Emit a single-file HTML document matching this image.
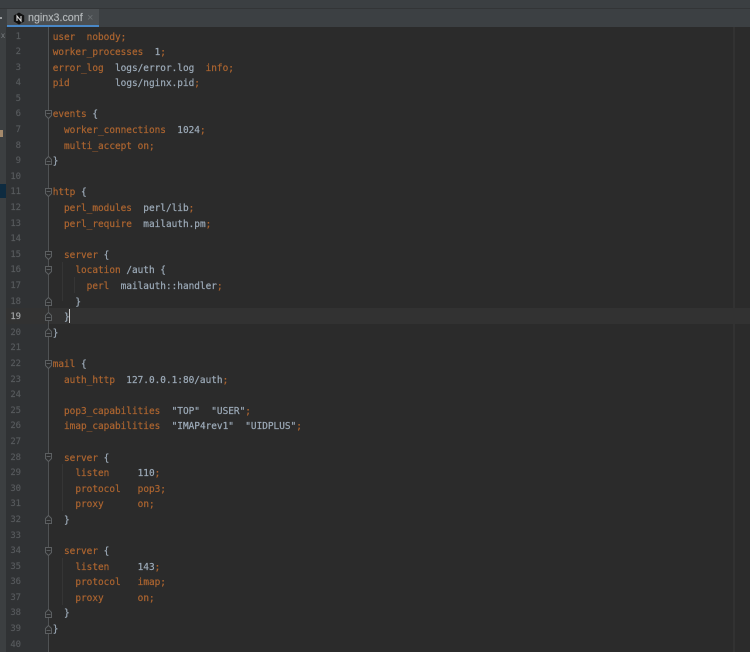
<!DOCTYPE html>
<html>
<head>
<meta charset="utf-8">
<style>
html,body{margin:0;padding:0;background:#2b2b2b;}
#root{position:relative;width:750px;height:652px;overflow:hidden;background:#2b2b2b;font-family:"DejaVu Sans Mono","Liberation Mono",monospace;}
.abs{position:absolute;}
#code{position:absolute;left:52.7px;top:29.5px;font-size:9.42px;line-height:15.6px;white-space:pre;color:#9dabb9;filter:blur(0.25px);-webkit-text-stroke:0.2px;}
#code b{font-weight:normal;color:#ad6530;}
#nums{position:absolute;left:2px;width:19px;top:29.5px;font-size:8.9px;line-height:15.6px;text-align:right;color:#585b5e;filter:blur(0.25px);-webkit-text-stroke:0.15px;}
</style>
</head>
<body>
<div id="root">
  <!-- top bars -->
  <div class="abs" style="left:0;top:0;width:750px;height:8px;background:#3b3f42;"></div>
  <div class="abs" style="left:0;top:8px;width:750px;height:1px;background:#333537;"></div>
  <div class="abs" style="left:0;top:9px;width:750px;height:18px;background:#3c4043;"></div>
  <div class="abs" style="left:7px;top:9px;width:92px;height:16px;background:#4b4f52;"></div>
  <div class="abs" style="left:7px;top:25px;width:92px;height:2px;background:#4a88c7;"></div>
  <div class="abs" style="left:0;top:17px;width:2px;height:2px;background:#9a9d9f;"></div>
  <svg class="abs" style="left:13px;top:12px;" width="12" height="13" viewBox="0 0 12 13"><path d="M6 .5 11.2 3.5V9.5L6 12.5.8 9.5V3.5Z" fill="#111"/><path d="M4 9V4L8 9V4" fill="none" stroke="#d8d8d8" stroke-width="1.1"/></svg>
  <div class="abs" style="left:28px;top:10px;font:10.7px/16px 'Liberation Sans',sans-serif;color:#b4b8ba;-webkit-text-stroke:0.15px;">nginx3.conf</div>
  <div class="abs" style="left:87px;top:11px;font:11px/14px 'Liberation Sans',sans-serif;color:#6a6f72;">×</div>

  <!-- left stripe & gutter -->
  <div class="abs" style="left:0;top:27px;width:6px;height:625px;background:#3c3f41;"></div>
  <div class="abs" style="left:6px;top:27px;width:42px;height:625px;background:#303234;"></div>
  <div class="abs" style="left:0;top:184px;width:6px;height:14px;background:#0e2b40;"></div>
  <div class="abs" style="left:0;top:130px;width:3px;height:7px;background:#a58a6c;"></div>
  <div class="abs" style="left:1px;top:31px;font:8px/10px 'Liberation Sans',sans-serif;color:#7b7f82;">x</div>

  <!-- caret row -->
  <div class="abs" style="left:6px;top:308px;width:744px;height:16px;background:#323232;"></div>
  <!-- right margin -->
  <div class="abs" style="left:733px;top:27px;width:2px;height:625px;background:#323232;"></div>
  <!-- gutter line -->
  <div class="abs" style="left:48px;top:27px;width:1px;height:625px;background:#4f5254;"></div>
  <!-- indent guides -->
  <div class="abs" style="left:62px;top:262px;width:1px;height:39px;background:#353535;"></div>
  <div class="abs" style="left:74px;top:277px;width:1px;height:16px;background:#353535;"></div>
  <div class="abs" style="left:62px;top:464px;width:1px;height:47px;background:#353535;"></div>
  <div class="abs" style="left:62px;top:558px;width:1px;height:47px;background:#353535;"></div>

  <!-- fold markers -->
  <svg class="abs" style="left:0;top:0;" width="60" height="652" viewBox="0 0 60 652" fill="#2d2e2f" stroke="#5c5f61" stroke-width="1">
    <g>
      <path d="M45.5 110.5h6v5l-3 3-3-3z"/><path d="M46.5 113.5h4"/>
      <path d="M45.5 188.5h6v5l-3 3-3-3z"/><path d="M46.5 191.5h4"/>
      <path d="M45.5 251.5h6v5l-3 3-3-3z"/><path d="M46.5 254.5h4"/>
      <path d="M45.5 266.5h6v5l-3 3-3-3z"/><path d="M46.5 269.5h4"/>
      <path d="M45.5 360.5h6v5l-3 3-3-3z"/><path d="M46.5 363.5h4"/>
      <path d="M45.5 453.5h6v5l-3 3-3-3z"/><path d="M46.5 456.5h4"/>
      <path d="M45.5 547.5h6v5l-3 3-3-3z"/><path d="M46.5 550.5h4"/>
    </g>
    <g>
      <path d="M45.5 164.5h6v-5l-3-3-3 3z"/><path d="M46.5 161.5h4"/>
      <path d="M45.5 305.5h6v-5l-3-3-3 3z"/><path d="M46.5 302.5h4"/>
      <path d="M45.5 320.5h6v-5l-3-3-3 3z"/><path d="M46.5 317.5h4"/>
      <path d="M45.5 336.5h6v-5l-3-3-3 3z"/><path d="M46.5 333.5h4"/>
      <path d="M45.5 523.5h6v-5l-3-3-3 3z"/><path d="M46.5 520.5h4"/>
      <path d="M45.5 617.5h6v-5l-3-3-3 3z"/><path d="M46.5 614.5h4"/>
      <path d="M45.5 633.5h6v-5l-3-3-3 3z"/><path d="M46.5 630.5h4"/>
    </g>
  </svg>

  <div id="nums">1<br>2<br>3<br>4<br>5<br>6<br>7<br>8<br>9<br>10<br>11<br>12<br>13<br>14<br>15<br>16<br>17<br>18<br><span style="color:#a4a6a8;">19</span><br>20<br>21<br>22<br>23<br>24<br>25<br>26<br>27<br>28<br>29<br>30<br>31<br>32<br>33<br>34<br>35<br>36<br>37<br>38<br>39<br>40<br>41</div>

  <div id="code"><b>user</b>  <b>nobody;</b>
<b>worker_processes</b>  1<b>;</b>
<b>error_log</b>  logs/error.log  <b>info;</b>
<b>pid</b>        logs/nginx.pid<b>;</b>

<b>events</b> {
  <b>worker_connections</b>  1024<b>;</b>
  <b>multi_accept</b> <b>on;</b>
}

<b>http</b> {
  <b>perl_modules</b>  perl/lib<b>;</b>
  <b>perl_require</b>  mailauth.pm<b>;</b>

  <b>server</b> {
    <b>location</b> /auth {
      <b>perl</b>  mailauth::handler<b>;</b>
    }
  }
}

<b>mail</b> {
  <b>auth_http</b>  127.0.0.1:80/auth<b>;</b>

  <b>pop3_capabilities</b>  "TOP"  "USER"<b>;</b>
  <b>imap_capabilities</b>  "IMAP4rev1"  "UIDPLUS"<b>;</b>

  <b>server</b> {
    <b>listen</b>     110<b>;</b>
    <b>protocol</b>   <b>pop3;</b>
    <b>proxy</b>      <b>on;</b>
  }

  <b>server</b> {
    <b>listen</b>     143<b>;</b>
    <b>protocol</b>   <b>imap;</b>
    <b>proxy</b>      <b>on;</b>
  }
}</div>

  <!-- caret -->
  <div class="abs" style="left:69px;top:309px;width:1px;height:14px;background:#c8c8c8;"></div>
</div>
</body>
</html>
